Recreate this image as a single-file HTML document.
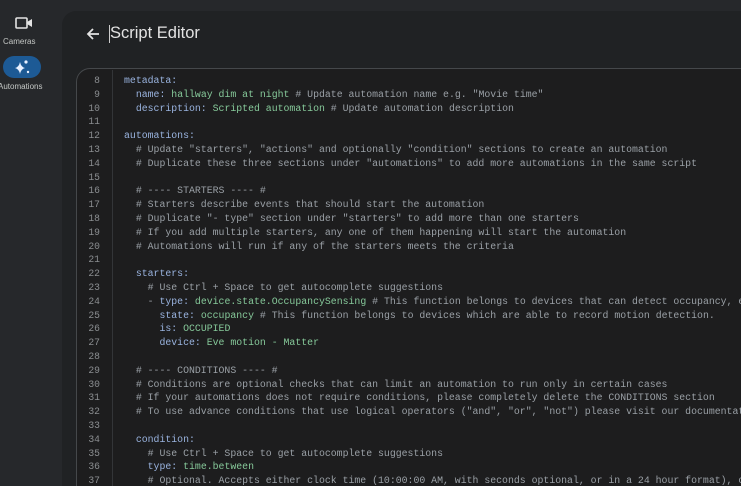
<!DOCTYPE html>
<html><head><style>
html,body{margin:0;padding:0;width:741px;height:486px;overflow:hidden;background:#26282b;font-family:"Liberation Sans",sans-serif;position:relative}
.side{position:absolute;left:0;top:0;width:52px;height:486px;background:#26282b}
.panel{position:absolute;left:62px;top:11px;width:679px;height:475px;background:#202224;border-radius:14px 0 0 0}
.title{position:absolute;left:110px;top:24px;color:#e3e3e3;font-size:16.5px}
.arrow{position:absolute;left:86px;top:27px}
.ed{position:absolute;left:76px;top:68px;width:670px;height:420px;background:#1d1d1e;border:1.5px solid #45484b;border-radius:14px 0 0 0}
.gut{position:absolute;left:112px;top:70px;width:1px;height:416px;background:#333538}
pre{margin:0;position:absolute;top:74px;font-family:"Liberation Mono",monospace;font-size:9.85px;line-height:13.8px;color:#9aa0a6;white-space:pre}
.ln{left:80px;width:20px;text-align:right;color:#8a8d90;font-size:9.7px}
.code{left:124px}
.k{color:#9ab4e0}.s{color:#86c99a}
</style></head><body>
<div class="side">
<svg style="position:absolute;left:15px;top:16px" width="18" height="14" viewBox="0 0 18 14"><rect x="1" y="2" width="11" height="10" rx="1" fill="none" stroke="#e3e3e3" stroke-width="1.6"/><path d="M12 6 L17 3 V11 L12 8Z" fill="#e3e3e3"/></svg>
<div style="position:absolute;left:3px;top:37px;font-size:8px;color:#c4c7c5">Cameras</div>
<div style="position:absolute;left:3px;top:56px;width:38px;height:22px;border-radius:11px;background:#1d5a95"></div>
<svg style="position:absolute;left:13px;top:58px" width="18" height="18" viewBox="0 0 18 18"><path d="M7 4 Q8 9 12 10 Q8 11 7 16 Q6 11 2 10 Q6 9 7 4Z" fill="#e8f0ff"/><circle cx="13" cy="4" r="1.6" fill="#e8f0ff"/><circle cx="15" cy="14" r="1.2" fill="#e8f0ff"/></svg>
<div style="position:absolute;left:-2px;top:82px;font-size:8px;color:#c4c7c5">Automations</div>
</div>
<div class="panel"></div>
<svg class="arrow" width="14" height="14" viewBox="0 0 14 14"><path d="M13 7H2M7 2L2 7L7 12" fill="none" stroke="#e3e3e3" stroke-width="1.8"/></svg>
<div style="position:absolute;left:109px;top:25px;width:1px;height:18px;background:#ccc"></div>
<div class="title">Script Editor</div>
<div class="ed"></div>
<div class="gut"></div>
<pre class="ln">8
9
10
11
12
13
14
15
16
17
18
19
20
21
22
23
24
25
26
27
28
29
30
31
32
33
34
35
36
37</pre>
<pre class="code"><span class="k">metadata:</span>
  <span class="k">name:</span> <span class="s">hallway dim at night</span> # Update automation name e.g. "Movie time"
  <span class="k">description:</span> <span class="s">Scripted automation</span> # Update automation description

<span class="k">automations:</span>
  # Update "starters", "actions" and optionally "condition" sections to create an automation
  # Duplicate these three sections under "automations" to add more automations in the same script

  # ---- STARTERS ---- #
  # Starters describe events that should start the automation
  # Duplicate "- type" section under "starters" to add more than one starters
  # If you add multiple starters, any one of them happening will start the automation
  # Automations will run if any of the starters meets the criteria

  <span class="k">starters:</span>
    # Use Ctrl + Space to get autocomplete suggestions
    - <span class="k">type:</span> <span class="s">device.state.OccupancySensing</span> # This function belongs to devices that can detect occupancy, e
      <span class="k">state:</span> <span class="s">occupancy</span> # This function belongs to devices which are able to record motion detection.
      <span class="k">is:</span> <span class="s">OCCUPIED</span>
      <span class="k">device:</span> <span class="s">Eve motion - Matter</span>

  # ---- CONDITIONS ---- #
  # Conditions are optional checks that can limit an automation to run only in certain cases
  # If your automations does not require conditions, please completely delete the CONDITIONS section
  # To use advance conditions that use logical operators ("and", "or", "not") please visit our documentati

  <span class="k">condition:</span>
    # Use Ctrl + Space to get autocomplete suggestions
    <span class="k">type:</span> <span class="s">time.between</span>
    # Optional. Accepts either clock time (10:00:00 AM, with seconds optional, or in a 24 hour format), o</pre>
</body></html>
